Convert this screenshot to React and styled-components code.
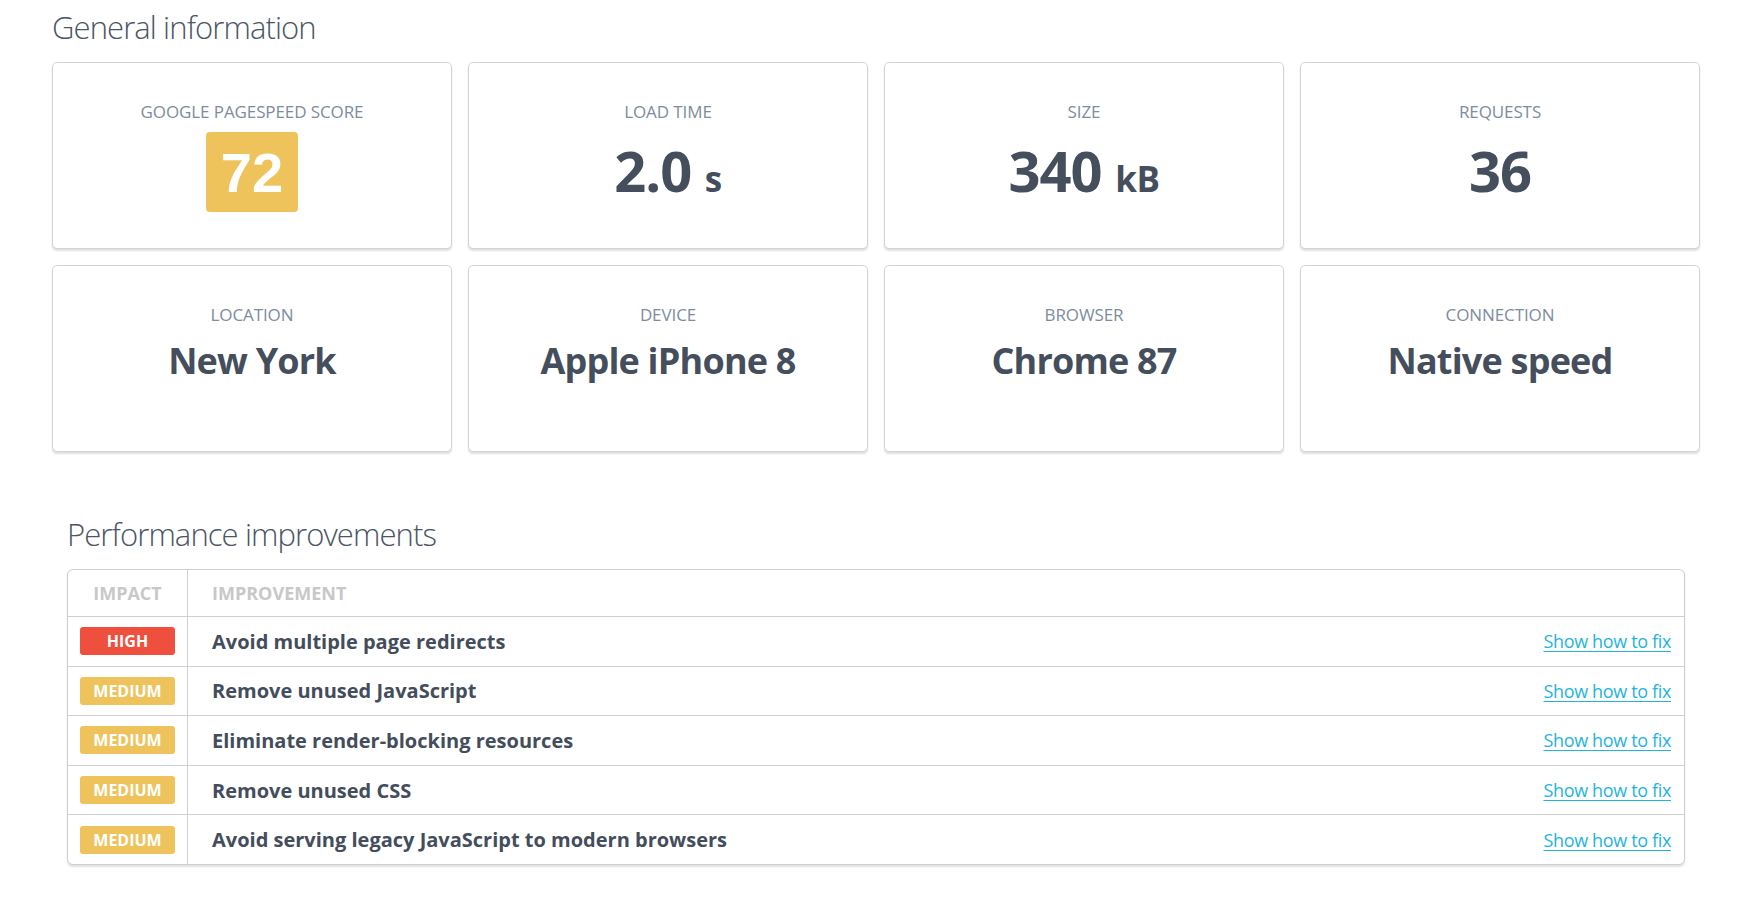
import React from "react";
import styled, { createGlobalStyle } from "styled-components";

const GlobalStyle = createGlobalStyle`
  html, body {
    margin: 0;
    padding: 0;
    background: #ffffff;
  }
  body {
    font-family: "Open Sans", "Noto Sans", sans-serif;
    color: #454f5d;
  }
  * { box-sizing: border-box; }
`;

const Page = styled.div`
  padding: 8px 45px 30px 52px;
`;

const SectionTitle = styled.h2`
  margin: 0 0 ${(p) => p.$gap || 16}px;
  font-family: "Open Sans", sans-serif;
  font-weight: 300;
  font-size: 31px;
  line-height: 38px;
  color: #4b5565;
  letter-spacing: -0.9px;
`;

const CardGrid = styled.div`
  display: grid;
  grid-template-columns: repeat(4, 400px);
  grid-auto-rows: 187px;
  gap: 16px;
`;

const Card = styled.div`
  display: flex;
  flex-direction: column;
  align-items: center;
  padding-top: 38px;
  border: 1px solid #d3d3d3;
  border-radius: 5px;
  background: #fff;
  box-shadow: 0 2px 2px rgba(0, 0, 0, 0.13);
`;

const Label = styled.div`
  font-size: 17px;
  line-height: 22px;
  font-weight: 400;
  color: #7d8c9e;
  text-transform: uppercase;
  letter-spacing: -0.1px;
`;

const Value = styled.div`
  margin-top: ${(p) => (p.$big ? 15 : 12)}px;
  font-weight: 700;
  font-size: ${(p) => (p.$big ? 56 : 36)}px;
  line-height: ${(p) => (p.$big ? 64 : 46)}px;
  color: #444e5c;
  letter-spacing: ${(p) => (p.$big ? -1 : -0.8)}px;
  white-space: nowrap;
`;

const Unit = styled.span`
  font-size: 35px;
  letter-spacing: -0.5px;
`;

const ScoreBox = styled.div`
  margin-top: 9px;
  width: 92px;
  height: 80px;
  border-radius: 4px;
  background: #eec35b;
  display: flex;
  align-items: center;
  justify-content: center;
  font-family: "Liberation Sans", Arial, sans-serif;
  font-weight: 700;
  font-size: 56px;
  line-height: 1;
  color: #ffffff;
  padding-top: 1px;
`;

const PerfSection = styled.section`
  margin-top: 63px;
  padding: 0 15px;
`;

const Table = styled.div`
  border: 1px solid #cfcfcf;
  border-radius: 6px;
  background: #fff;
  box-shadow: 0 2px 2px rgba(0, 0, 0, 0.12);
`;

const Row = styled.div`
  display: grid;
  grid-template-columns: 120px 1fr;
  height: ${(p) => (p.$head ? 47 : 49.6)}px;
  border-bottom: 1px solid #d0d0d0;
  &:last-child {
    border-bottom: none;
    height: 48.6px;
  }
`;

const ImpactCell = styled.div`
  display: flex;
  align-items: center;
  justify-content: center;
  border-right: 1px solid #d0d0d0;
`;

const MainCell = styled.div`
  display: flex;
  align-items: center;
  justify-content: space-between;
  padding: 0 13px 0 24px;
`;

const HeadText = styled.span`
  font-weight: 700;
  font-size: 18px;
  color: #c8c8c8;
  text-transform: uppercase;
  letter-spacing: 0;
`;

const Badge = styled.span`
  display: inline-flex;
  align-items: center;
  justify-content: center;
  width: 95px;
  height: 28px;
  border-radius: 3px;
  background: ${(p) => (p.$level === "high" ? "#ef503e" : "#eec35b")};
  color: #fff;
  font-weight: 700;
  font-size: 16px;
  letter-spacing: 0;
  text-transform: uppercase;
`;

const ImprovementText = styled.span`
  font-weight: 700;
  font-size: 20px;
  color: #434d5b;
  letter-spacing: 0;
`;

const FixLink = styled.a`
  font-size: 18px;
  color: #1fb4df;
  text-decoration: underline;
  text-underline-offset: 3px;
  letter-spacing: -0.35px;
  cursor: pointer;
`;

const general = [
  { label: "Google PageSpeed score", score: 72 },
  { label: "Load time", value: "2.0", unit: "s" },
  { label: "Size", value: "340", unit: "kB" },
  { label: "Requests", value: "36" },
  { label: "Location", text: "New York" },
  { label: "Device", text: "Apple iPhone 8" },
  { label: "Browser", text: "Chrome 87" },
  { label: "Connection", text: "Native speed" },
];

const improvements = [
  { level: "high", text: "Avoid multiple page redirects" },
  { level: "medium", text: "Remove unused JavaScript" },
  { level: "medium", text: "Eliminate render-blocking resources" },
  { level: "medium", text: "Remove unused CSS" },
  { level: "medium", text: "Avoid serving legacy JavaScript to modern browsers" },
];

export default function App() {
  return (
    <>
      <GlobalStyle />
      <Page>
        <SectionTitle>General information</SectionTitle>
        <CardGrid>
          {general.map((g) => (
            <Card key={g.label}>
              <Label>{g.label}</Label>
              {g.score !== undefined ? (
                <ScoreBox>{g.score}</ScoreBox>
              ) : g.text ? (
                <Value>{g.text}</Value>
              ) : (
                <Value $big>
                  {g.value}
                  {g.unit ? (
                    <>
                      {" "}
                      <Unit>{g.unit}</Unit>
                    </>
                  ) : null}
                </Value>
              )}
            </Card>
          ))}
        </CardGrid>

        <PerfSection>
          <SectionTitle $gap={16}>Performance improvements</SectionTitle>
          <Table>
            <Row $head>
              <ImpactCell>
                <HeadText>Impact</HeadText>
              </ImpactCell>
              <MainCell>
                <HeadText>Improvement</HeadText>
              </MainCell>
            </Row>
            {improvements.map((it) => (
              <Row key={it.text}>
                <ImpactCell>
                  <Badge $level={it.level}>{it.level}</Badge>
                </ImpactCell>
                <MainCell>
                  <ImprovementText>{it.text}</ImprovementText>
                  <FixLink>Show how to fix</FixLink>
                </MainCell>
              </Row>
            ))}
          </Table>
        </PerfSection>
      </Page>
    </>
  );
}
